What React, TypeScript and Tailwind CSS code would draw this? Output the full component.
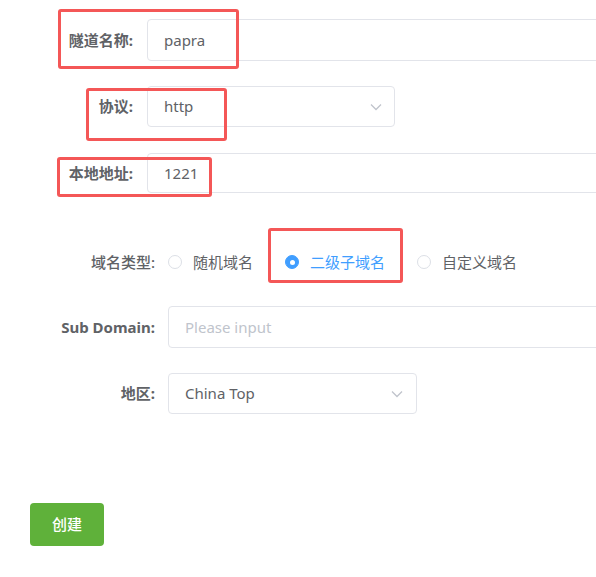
import { useState } from 'react';

const font = { fontFamily: '"Noto Sans", "Noto Sans CJK SC", sans-serif' };

const Chevron = () => (
  <svg width="12" height="8" viewBox="0 0 12 8" fill="none" className="text-[#c0c4cc]">
    <path d="M1 1.5 6 6.5 11 1.5" stroke="currentColor" strokeWidth="1.3" />
  </svg>
);

const RedBox = ({ className }: { className: string }) => (
  <div className={`pointer-events-none absolute rounded-[3px] border-[3px] border-[#f45757] ${className}`} />
);

export default function App() {
  const [domainType, setDomainType] = useState('sub');

  const types = [
    { key: 'random', label: '随机域名' },
    { key: 'sub', label: '二级子域名' },
    { key: 'custom', label: '自定义域名' },
  ];

  return (
    <div className="w-[596px] h-[577px] overflow-hidden bg-white text-[15px] text-[#606266]" style={font}>
      <div className="flex flex-col pt-[19px]">
        {/* 隧道名称 */}
        <div className="relative flex items-center h-[42px]">
          <label className="w-[133px] shrink-0 text-right font-bold">隧道名称:</label>
          <div className="ml-[14px] w-[500px] h-full shrink-0 flex items-center px-4 border border-[#e2e4ea] rounded-[4px]">papra</div>
          <RedBox className="left-[58px] -top-[10px] w-[181px] h-[60px]" />
        </div>

        {/* 协议 */}
        <div className="relative flex items-center h-[41px] mt-[25px]">
          <label className="w-[133px] shrink-0 text-right font-bold">协议:</label>
          <div className="ml-[14px] w-[248px] h-full shrink-0 flex items-center justify-between pl-4 pr-[12px] border border-[#e2e4ea] rounded-[4px]">
            <span>http</span>
            <Chevron />
          </div>
          <RedBox className="left-[86px] top-[2px] w-[141px] h-[53px]" />
        </div>

        {/* 本地地址 */}
        <div className="relative flex items-center h-[40px] mt-[26px]">
          <label className="w-[133px] shrink-0 text-right font-bold">本地地址:</label>
          <div className="ml-[14px] w-[500px] h-full shrink-0 flex items-center px-4 border border-[#e2e4ea] rounded-[4px]">1221</div>
          <RedBox className="left-[57px] top-[4px] w-[155px] h-[40px]" />
        </div>

        {/* 域名类型 */}
        <div className="relative flex items-center h-[42px] mt-[48px]">
          <label className="w-[155px] shrink-0 text-right font-medium">域名类型:</label>
          <div className="ml-[13px] flex items-center gap-[32px]">
            {types.map((t) => {
              const checked = domainType === t.key;
              return (
                <button key={t.key} onClick={() => setDomainType(t.key)} className="flex items-center gap-[11px]">
                  <span
                    className={`w-[14px] h-[14px] rounded-full border flex items-center justify-center ${
                      checked ? 'bg-[#409eff] border-[#409eff]' : 'bg-white border-[#dcdfe6]'
                    }`}
                  >
                    {checked && <span className="w-[5px] h-[5px] rounded-full bg-white" />}
                  </span>
                  <span className={checked ? 'text-[#409eff]' : ''}>{t.label}</span>
                </button>
              );
            })}
          </div>
          <RedBox className="left-[268px] -top-[13px] w-[135px] h-[55px]" />
        </div>

        {/* Sub Domain */}
        <div className="flex items-center h-[42px] mt-[23px]">
          <label className="w-[155px] shrink-0 text-right font-bold">Sub Domain:</label>
          <input
            placeholder="Please input"
            className="ml-[13px] w-[480px] h-full shrink-0 px-4 border border-[#e2e4ea] rounded-[4px] outline-none placeholder-[#c0c4cc]"
          />
        </div>

        {/* 地区 */}
        <div className="flex items-center h-[41px] mt-[25px]">
          <label className="w-[155px] shrink-0 text-right font-bold">地区:</label>
          <div className="ml-[13px] w-[249px] h-full shrink-0 flex items-center justify-between pl-4 pr-[13px] border border-[#e2e4ea] rounded-[4px]">
            <span>China Top</span>
            <Chevron />
          </div>
        </div>

        <div className="mt-[89px] pl-[30px]">
          <button className="w-[74px] h-[43px] rounded-[4px] bg-[#5fb13a] text-white font-medium">创建</button>
        </div>
      </div>
    </div>
  );
}
